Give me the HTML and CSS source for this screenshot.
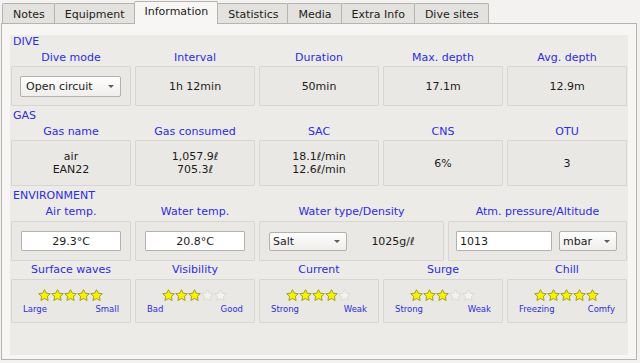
FILE: index.html
```html
<!DOCTYPE html>
<html lang="en">

<head>
    <meta charset="UTF-8">
    <title>Dive Information</title>
    <link rel="stylesheet" href="styles.css">
</head>

<body>
    <svg class="icon-defs" width="0" height="0" aria-hidden="true">
        <defs>
            <symbol id="star-on" viewBox="0 0 13 13">
                <path d="M6.5 0.7 L8.3 4.2 L12.3 4.7 L9.4 7.4 L10.1 11.5 L6.5 9.5 L2.9 11.5 L3.6 7.4 L0.7 4.7 L4.7 4.2 Z"
                      fill="#f6f200" stroke="#8f8c1e" stroke-width="0.8" stroke-linejoin="round"/>
            </symbol>
            <symbol id="star-off" viewBox="0 0 13 13">
                <path d="M6.5 0.7 L8.3 4.2 L12.3 4.7 L9.4 7.4 L10.1 11.5 L6.5 9.5 L2.9 11.5 L3.6 7.4 L0.7 4.7 L4.7 4.2 Z"
                      fill="#f4f3f1" stroke="#d6d4d0" stroke-width="0.8" stroke-linejoin="round"/>
            </symbol>
        </defs>
    </svg>

    <div class="tabwidget">
        <div class="tabbar">
            <div class="tab">Notes</div>
            <div class="tab">Equipment</div>
            <div class="tab active">Information</div>
            <div class="tab">Statistics</div>
            <div class="tab">Media</div>
            <div class="tab">Extra Info</div>
            <div class="tab">Dive sites</div>
        </div>

        <div class="pane">
            <div class="page">
                <!-- dive -->
                <div class="section-title first">DIVE</div>
                <div class="row labels">
                    <div>Dive mode</div>
                    <div>Interval</div>
                    <div>Duration</div>
                    <div>Max. depth</div>
                    <div>Avg. depth</div>
                </div>
                <div class="row boxes dive-boxes">
                    <div class="box">
                        <div class="combo combo-mode">
                            <span>Open circuit</span>
                            <span class="arrow"></span>
                        </div>
                    </div>
                    <div class="box value">1h 12min</div>
                    <div class="box value">50min</div>
                    <div class="box value">17.1m</div>
                    <div class="box value">12.9m</div>
                </div>

                <!-- gas -->
                <div class="section-title">GAS</div>
                <div class="row labels">
                    <div>Gas name</div>
                    <div>Gas consumed</div>
                    <div>SAC</div>
                    <div>CNS</div>
                    <div>OTU</div>
                </div>
                <div class="row boxes gas-boxes">
                    <div class="box value">air<br>EAN22</div>
                    <div class="box value">1,057.9ℓ<br>705.3ℓ</div>
                    <div class="box value">18.1ℓ/min<br>12.6ℓ/min</div>
                    <div class="box value">6%</div>
                    <div class="box value">3</div>
                </div>

                <!-- environment -->
                <div class="section-title">ENVIRONMENT</div>
                <div class="row env labels">
                    <div>Air temp.</div>
                    <div>Water temp.</div>
                    <div>Water type/Density</div>
                    <div>Atm. pressure/Altitude</div>
                </div>
                <div class="row env boxes env-boxes">
                    <div class="box field">
                        <input class="edit centered" type="text" value="29.3°C">
                    </div>
                    <div class="box field">
                        <input class="edit centered" type="text" value="20.8°C">
                    </div>
                    <div class="box field water">
                        <div class="combo combo-salt">
                            <span>Salt</span>
                            <span class="arrow"></span>
                        </div>
                        <div class="density">1025g/ℓ</div>
                    </div>
                    <div class="box field pressure">
                        <input class="edit" type="text" value="1013">
                        <div class="combo combo-unit">
                            <span>mbar</span>
                            <span class="arrow"></span>
                        </div>
                    </div>
                </div>

                <div class="row labels rating-labels">
                    <div>Surface waves</div>
                    <div>Visibility</div>
                    <div>Current</div>
                    <div>Surge</div>
                    <div>Chill</div>
                </div>
                <div class="row boxes rating-boxes">
                    <div class="box rating">
                        <div class="stars">
                            <svg class="star"><use href="#star-on"/></svg>
                            <svg class="star"><use href="#star-on"/></svg>
                            <svg class="star"><use href="#star-on"/></svg>
                            <svg class="star"><use href="#star-on"/></svg>
                            <svg class="star"><use href="#star-on"/></svg>
                        </div>
                        <div class="ends"><span>Large</span><span>Small</span></div>
                    </div>
                    <div class="box rating">
                        <div class="stars">
                            <svg class="star"><use href="#star-on"/></svg>
                            <svg class="star"><use href="#star-on"/></svg>
                            <svg class="star"><use href="#star-on"/></svg>
                            <svg class="star"><use href="#star-off"/></svg>
                            <svg class="star"><use href="#star-off"/></svg>
                        </div>
                        <div class="ends"><span>Bad</span><span>Good</span></div>
                    </div>
                    <div class="box rating">
                        <div class="stars">
                            <svg class="star"><use href="#star-on"/></svg>
                            <svg class="star"><use href="#star-on"/></svg>
                            <svg class="star"><use href="#star-on"/></svg>
                            <svg class="star"><use href="#star-on"/></svg>
                            <svg class="star"><use href="#star-off"/></svg>
                        </div>
                        <div class="ends"><span>Strong</span><span>Weak</span></div>
                    </div>
                    <div class="box rating">
                        <div class="stars">
                            <svg class="star"><use href="#star-on"/></svg>
                            <svg class="star"><use href="#star-on"/></svg>
                            <svg class="star"><use href="#star-on"/></svg>
                            <svg class="star"><use href="#star-off"/></svg>
                            <svg class="star"><use href="#star-off"/></svg>
                        </div>
                        <div class="ends"><span>Strong</span><span>Weak</span></div>
                    </div>
                    <div class="box rating">
                        <div class="stars">
                            <svg class="star"><use href="#star-on"/></svg>
                            <svg class="star"><use href="#star-on"/></svg>
                            <svg class="star"><use href="#star-on"/></svg>
                            <svg class="star"><use href="#star-on"/></svg>
                            <svg class="star"><use href="#star-on"/></svg>
                        </div>
                        <div class="ends"><span>Freezing</span><span>Comfy</span></div>
                    </div>
                </div>
            </div>
        </div>
    </div>
</body>

</html>
```

FILE: styles.css
```css
:root {
    --window-bg: #f3f2f0;
    --pane-bg: #f7f6f4;
    --page-bg: #edebe7;
    --box-bg: #eae8e4;
    --box-border: #d8d6d2;
    --tab-bg: #e4e2de;
    --frame-border: #b6b4b0;
    --label-color: #2c2ce0;
    --text-color: #1c1c1c;
}

* {
    margin: 0;
    padding: 0;
    box-sizing: border-box;
}

body {
    font-family: "DejaVu Sans", "Liberation Sans", sans-serif;
    font-size: 11px;
    color: var(--text-color);
    background-color: var(--window-bg);
    overflow: hidden;
}

.icon-defs {
    display: block;
    height: 0;
    width: 0;
}

.tabwidget {
    margin-left: 1px;
    width: 636px;
}

/* tabs */

.tabbar {
    display: flex;
    align-items: flex-end;
    height: 23px;
    padding-left: 1px;
}

.tab {
    height: 20px;
    padding: 2px 9px 0 10px;
    line-height: 17px;
    background-color: var(--tab-bg);
    border: 1px solid var(--frame-border);
    border-bottom: none;
    border-radius: 2px 2px 0 0;
    margin-right: -1px;
    white-space: nowrap;
}

.tab.active {
    position: relative;
    z-index: 1;
    height: 23px;
    margin-bottom: -1px;
    padding-top: 1px;
    background-color: var(--pane-bg);
}

/* pane */

.pane {
    height: 337px;
    padding: 9px 8px 6px 8px;
    background-color: var(--pane-bg);
    border: 1px solid var(--frame-border);
}

.page {
    height: 320px;
    padding: 0 1px;
    background-color: var(--page-bg);
}

.section-title {
    margin-top: 3px;
    padding-left: 2px;
    line-height: 13px;
    color: var(--label-color);
}

.section-title.first {
    margin-top: 2px;
}

.row {
    display: grid;
    grid-template-columns: repeat(5, 1fr);
    column-gap: 4px;
}

.row.env {
    grid-template-columns: 120px 120px 185px 1fr;
}

.labels {
    margin-top: 3px;
    line-height: 13px;
    text-align: center;
    color: var(--label-color);
}

.rating-labels {
    margin-top: 2px;
}

.boxes {
    margin-top: 2px;
}

.env-boxes,
.rating-boxes {
    margin-top: 3px;
}

.box {
    background-color: var(--box-bg);
    border: 1px solid var(--box-border);
    border-radius: 1px;
}

.dive-boxes .box {
    height: 40px;
}

.gas-boxes .box {
    height: 46px;
}

.env-boxes .box {
    height: 40px;
}

.rating-boxes .box {
    height: 44px;
}

.value {
    display: flex;
    align-items: center;
    justify-content: center;
    text-align: center;
    line-height: 13px;
}

.dive-boxes .box:first-child {
    display: flex;
    align-items: center;
    padding: 0 9px 0 8px;
}

/* combo boxes */

.combo {
    display: flex;
    align-items: center;
    justify-content: space-between;
    background: linear-gradient(#fefefe, #efeeec);
    border: 1px solid #b3b1ad;
    border-radius: 2px;
    color: var(--text-color);
}

.combo .arrow {
    width: 0;
    height: 0;
    border-left: 3px solid transparent;
    border-right: 3px solid transparent;
    border-top: 3px solid #5c5c5c;
}

.combo-mode {
    width: 100%;
    height: 21px;
    padding: 0 6px 0 5px;
}

.combo-salt {
    width: 78px;
    height: 19px;
    padding: 0 6px 0 3px;
}

.combo-unit {
    width: 58px;
    height: 20px;
    padding: 0 6px 0 3px;
}

/* environment fields */

.field {
    display: flex;
    align-items: center;
    padding: 0 9px;
}

.edit {
    width: 100%;
    height: 20px;
    padding: 0 3px;
    font-family: inherit;
    font-size: 11px;
    color: var(--text-color);
    background-color: #ffffff;
    border: 1px solid #b3b1ad;
    border-radius: 1px;
    outline: none;
}

.edit.centered {
    text-align: center;
}

.water {
    padding: 0 10px 0 9px;
}

.density {
    flex: 1;
    text-align: center;
    padding-left: 6px;
}

.pressure {
    gap: 7px;
    padding: 0 9px 0 7px;
}

.pressure .edit {
    flex: 1;
}

/* ratings */

.rating {
    padding: 9px 11px 0 11px;
}

.stars {
    display: flex;
    justify-content: center;
    padding-right: 2px;
}

.star {
    width: 13px;
    height: 13px;
}

.ends {
    display: flex;
    justify-content: space-between;
    margin-top: 2px;
    font-size: 8.5px;
    line-height: 11px;
    color: var(--label-color);
}
```
